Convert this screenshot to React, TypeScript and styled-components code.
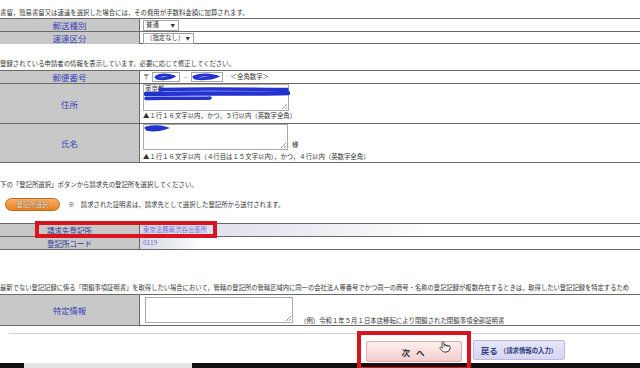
import styled, { createGlobalStyle } from "styled-components";
import { Pointer } from "lucide-react";

const GlobalStyle = createGlobalStyle`
  *, *::before, *::after { box-sizing: border-box; }
  html, body { margin: 0; padding: 0; background: #fff; overflow: hidden; }
  body { font-family: "Noto Sans CJK JP", "Noto Sans", sans-serif; color: #333; }
`;

const Page = styled.div`
  position: relative;
  width: 640px;
  height: 368px;
  overflow: hidden;
  display: flex;
  flex-direction: column;
`;

const Note = styled.div<{ $top: number; $size?: number }>`
  margin-top: ${(p) => p.$top}px;
  font-size: ${(p) => p.$size ?? 6.4}px;
  line-height: 8px;
  height: 8px;
  white-space: nowrap;
  color: #333;
`;

const FormTable = styled.div<{ $top: number }>`
  position: relative;
  margin-top: ${(p) => p.$top}px;
  border-top: 1px solid #6a6a6a;
`;

const Row = styled.div<{ $h: number }>`
  display: grid;
  grid-template-columns: 140px 1fr;
  height: ${(p) => p.$h}px;
  border-bottom: 1px solid #6a6a6a;
`;

const Label = styled.div<{ $size?: number; $dark?: boolean }>`
  background: #c8c8c8;
  border-right: 1px solid #6a6a6a;
  display: flex;
  align-items: center;
  justify-content: center;
  font-size: ${(p) => p.$size ?? 8.5}px;
  color: ${(p) => (p.$dark ? "#2a3596" : "#3a44b8")};
  white-space: nowrap;
`;

const Value = styled.div<{ $pad?: number; $column?: boolean }>`
  display: flex;
  flex-direction: ${(p) => (p.$column ? "column" : "row")};
  align-items: ${(p) => (p.$column ? "flex-start" : "center")};
  padding-left: ${(p) => p.$pad ?? 3}px;
  font-size: 6.4px;
  line-height: 8px;
  white-space: nowrap;
  color: #333;
  min-width: 0;
`;

const SelectBox = styled.div<{ $w: number }>`
  width: ${(p) => p.$w}px;
  height: 11px;
  border: 1px solid #a4a4a4;
  background: #fff;
  display: flex;
  align-items: center;
  justify-content: space-between;
  padding: 0 3px 0 2px;
  font-size: 6.4px;
  span {
    font-size: 4.5px;
  }
`;

const InputBox = styled.div<{ $w: number }>`
  width: ${(p) => p.$w}px;
  height: 10px;
  border: 1px solid #a8a8a8;
  background: #fff;
  display: flex;
  align-items: center;
  margin: 0 3px;
`;

const Dash = styled.span`
  margin: 0 1px;
`;

const Hint = styled.span`
  margin-left: 5px;
`;

const Area = styled.div<{ $w: number; $h: number }>`
  position: relative;
  width: ${(p) => p.$w}px;
  height: ${(p) => p.$h}px;
  border: 1px solid #ababab;
  background: #fff;
  flex-shrink: 0;
  padding: 0 1px;
  &::after {
    content: "";
    position: absolute;
    right: 1px;
    bottom: 1px;
    width: 5px;
    height: 5px;
    background: linear-gradient(
      135deg,
      transparent 48%,
      #9a9a9a 48%,
      #9a9a9a 58%,
      transparent 58%,
      transparent 74%,
      #9a9a9a 74%,
      #9a9a9a 84%,
      transparent 84%
    );
  }
`;

const Scribble = styled.svg`
  position: absolute;
  left: 0;
  top: 0;
  pointer-events: none;
`;

const LineWithSuffix = styled.div`
  display: flex;
  align-items: flex-end;
`;

const Suffix = styled.span`
  margin-left: 4px;
  margin-bottom: 1px;
`;

const AreaHint = styled.div<{ $gap: number }>`
  margin-top: ${(p) => p.$gap}px;
`;

const ActionRow = styled.div`
  margin-top: 9px;
  height: 13px;
  display: flex;
  align-items: center;
  padding-left: 5px;
  font-size: 6.4px;
  white-space: nowrap;
`;

const PillButton = styled.div`
  width: 55px;
  height: 13px;
  border-radius: 7px;
  border: 1px solid #c0681c;
  background: linear-gradient(#f9b06a, #e9821f);
  color: #fff4e4;
  text-shadow: 0 0 1px #7a3c08, 0 0 1px #7a3c08;
  font-size: 6.4px;
  display: flex;
  align-items: center;
  justify-content: center;
  margin-right: 8px;
`;

const OfficeValue = styled(Value)<{ $fade: number }>`
  color: #6c6cd6;
  background: linear-gradient(90deg, #d9d9e6 0, #ececf2 ${(p) => p.$fade * 0.6}px, #fff ${(p) => p.$fade}px);
`;

const Callout = styled.div<{ $x: number; $y: number; $w: number; $h: number }>`
  position: absolute;
  left: ${(p) => p.$x}px;
  top: ${(p) => p.$y}px;
  width: ${(p) => p.$w}px;
  height: ${(p) => p.$h}px;
  border: 4px solid #d8141e;
  pointer-events: none;
`;

const ExampleHint = styled.span`
  align-self: flex-end;
  margin-left: 7px;
`;

const Rule = styled.div`
  margin: 7px 0 0 9px;
  height: 1px;
  background: #d0d0d0;
`;

const Buttons = styled.div`
  margin-top: 6px;
  display: flex;
  justify-content: flex-end;
  align-items: flex-start;
  gap: 11px;
  padding-right: 75px;
`;

const NextButton = styled.div`
  position: relative;
  margin-top: 1px;
  width: 96px;
  height: 21px;
  border: 1px solid #e2aaaa;
  border-radius: 2px;
  background: linear-gradient(#fdeeee, #f5cfcf);
  display: flex;
  align-items: center;
  justify-content: center;
  font-size: 8.5px;
  font-weight: bold;
  color: #333;
  letter-spacing: 2px;
`;

const Cursor = styled.div`
  position: absolute;
  left: 72px;
  top: -1px;
  line-height: 0;
`;

const BackButton = styled.div`
  width: 92px;
  height: 20px;
  border: 1px solid #b8b8e0;
  border-radius: 2px;
  background: linear-gradient(#e6e6f8, #d6d6f2);
  display: flex;
  align-items: center;
  justify-content: center;
  font-weight: bold;
  color: #2d3a80;
  white-space: nowrap;
  font-size: 8.5px;
  small {
    font-size: 6.4px;
    margin-left: 2px;
  }
`;

const ScreenEdge = styled.div`
  margin-top: auto;
  height: 5px;
  background: #111;
  display: flex;
  div {
    margin-left: 24px;
    width: 168px;
    background: #e4e4e4;
  }
`;

const BLUE = "#2432d0";

function App() {
  return (
    <Page>
      <GlobalStyle />
      <Note $top={9}>書留，簡易書留又は速達を選択した場合には，その費用が手数料金額に加算されます。</Note>
      <FormTable $top={1}>
        <Row $h={13}>
          <Label>郵送種別</Label>
          <Value>
            <SelectBox $w={36}>
              普通<span>▼</span>
            </SelectBox>
          </Value>
        </Row>
        <Row $h={12}>
          <Label>速達区分</Label>
          <Value>
            <SelectBox $w={51}>
              （指定なし）<span>▼</span>
            </SelectBox>
          </Value>
        </Row>
      </FormTable>

      <Note $top={16}>登録されている申請者の情報を表示しています。必要に応じて修正してください。</Note>
      <FormTable $top={2}>
        <Row $h={13}>
          <Label>郵便番号</Label>
          <Value>
            〒
            <InputBox $w={28}>
              <svg width="26" height="8">
                <path d="M3 4 C 7 1.5, 15 1.5, 20 3.5 C 16 6, 8 6, 4 5" stroke={BLUE} strokeWidth="3" fill="none" strokeLinecap="round" />
              </svg>
            </InputBox>
            <Dash>-</Dash>
            <InputBox $w={32}>
              <svg width="30" height="8">
                <path d="M2 4 C 8 1.5, 18 1.5, 24 3.5 C 18 6, 8 6, 3 5" stroke={BLUE} strokeWidth="3" fill="none" strokeLinecap="round" />
              </svg>
            </InputBox>
            <Hint>＜全角数字＞</Hint>
          </Value>
        </Row>
        <Row $h={40}>
          <Label>住所</Label>
          <Value $column>
            <Area $w={146} $h={27}>
              東京都
              <Scribble width="146" height="27">
                <path d="M16 4.5 C 50 3.5, 100 4, 143 4.5" stroke={BLUE} strokeWidth="3.5" fill="none" strokeLinecap="round" />
                <path d="M2 9 C 40 7.5, 100 9.5, 144 8" stroke={BLUE} strokeWidth="4.5" fill="none" strokeLinecap="round" />
                <path d="M2 13.5 C 20 12.5, 45 14, 66 13" stroke={BLUE} strokeWidth="3.5" fill="none" strokeLinecap="round" />
              </Scribble>
            </Area>
            <AreaHint $gap={1}>▲１行１６文字以内，かつ，５行以内（英数字全角）</AreaHint>
          </Value>
        </Row>
        <Row $h={39}>
          <Label>氏名</Label>
          <Value $column>
            <LineWithSuffix>
              <Area $w={145} $h={26}>
                <Scribble width="145" height="26">
                  <path d="M2 3 C 8 1.5, 16 1.5, 21 3 C 15 5, 7 5, 3 4.2" stroke={BLUE} strokeWidth="3" fill="none" strokeLinecap="round" />
                </Scribble>
              </Area>
              <Suffix>様</Suffix>
            </LineWithSuffix>
            <AreaHint $gap={3}>▲１行１６文字以内（４行目は１５文字以内），かつ，４行以内（英数字全角）</AreaHint>
          </Value>
        </Row>
      </FormTable>

      <Note $top={18}>下の「登記所選択」ボタンから請求先の登記所を選択してください。</Note>
      <ActionRow>
        <PillButton>登記所選択</PillButton>
        ※　請求された証明書は，請求先として選択した登記所から送付されます。
      </ActionRow>

      <FormTable $top={12}>
        <Row $h={13}>
          <Label $size={7.5} $dark>
            請求先登記所
          </Label>
          <OfficeValue $fade={290}>東京法務局渋谷出張所</OfficeValue>
        </Row>
        <Row $h={13}>
          <Label $size={7.5} $dark>
            登記所コード
          </Label>
          <OfficeValue $fade={60}>0119</OfficeValue>
        </Row>
        <Callout $x={35} $y={-3} $w={182} $h={17} />
      </FormTable>

      <Note $top={34} $size={6.3}>
        最新でない登記記録に係る「閉鎖事項証明書」を取得したい場合において，管轄の登記所の管轄区域内に同一の会社法人等番号でかつ同一の商号・名称の登記記録が複数存在するときは，取得したい登記記録を特定するため
      </Note>
      <FormTable $top={2}>
        <Row $h={31}>
          <Label $size={8.3}>特定情報</Label>
          <Value $pad={5}>
            <Area $w={148} $h={26} />
            <ExampleHint>（例）令和１年５月１日本店移転により閉鎖された閉鎖事項全部証明書</ExampleHint>
          </Value>
        </Row>
      </FormTable>

      <Rule />
      <Buttons>
        <NextButton>
          次 へ
          <Cursor>
            <Pointer size={12} color="#222" fill="#fff" strokeWidth={1.6} />
          </Cursor>
        </NextButton>
        <BackButton>
          戻る<small>（請求情報の入力）</small>
        </BackButton>
      </Buttons>
      <ScreenEdge>
        <div />
      </ScreenEdge>
      <Callout $x={357} $y={331} $w={114} $h={40} />
    </Page>
  );
}

export default App;
